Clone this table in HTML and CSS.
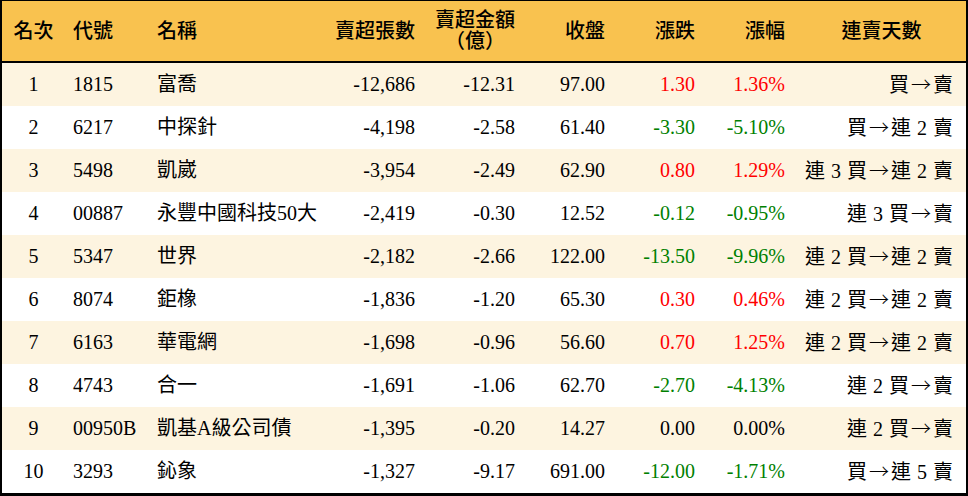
FILE: index.html
```html
<!DOCTYPE html>
<html lang="zh-Hant">
<head>
<meta charset="utf-8">
<title>賣超排行</title>
<link rel="stylesheet" href="styles.css">
</head>
<body>
<div class="board">
  <div class="row head">
    <div class="c rank">名次</div>
    <div class="c code">代號</div>
    <div class="c name">名稱</div>
    <div class="c num">賣超張數</div>
    <div class="c num two"><span>賣超金額<br>（億）</span></div>
    <div class="c num">收盤</div>
    <div class="c num">漲跌</div>
    <div class="c num pct">漲幅</div>
    <div class="c days hd">連賣天數</div>
  </div>
  <div class="row alt">
    <div class="c rank">1</div><div class="c code">1815</div><div class="c name">富喬</div>
    <div class="c num">-12,686</div><div class="c num">-12.31</div><div class="c num">97.00</div>
    <div class="c num up">1.30</div><div class="c num pct up">1.36%</div><div class="c days">買<span class="ar">→</span>賣</div>
  </div>
  <div class="row">
    <div class="c rank">2</div><div class="c code">6217</div><div class="c name">中探針</div>
    <div class="c num">-4,198</div><div class="c num">-2.58</div><div class="c num">61.40</div>
    <div class="c num dn">-3.30</div><div class="c num pct dn">-5.10%</div><div class="c days">買<span class="ar">→</span>連 2 賣</div>
  </div>
  <div class="row alt">
    <div class="c rank">3</div><div class="c code">5498</div><div class="c name">凱崴</div>
    <div class="c num">-3,954</div><div class="c num">-2.49</div><div class="c num">62.90</div>
    <div class="c num up">0.80</div><div class="c num pct up">1.29%</div><div class="c days">連 3 買<span class="ar">→</span>連 2 賣</div>
  </div>
  <div class="row">
    <div class="c rank">4</div><div class="c code">00887</div><div class="c name">永豐中國科技50大</div>
    <div class="c num">-2,419</div><div class="c num">-0.30</div><div class="c num">12.52</div>
    <div class="c num dn">-0.12</div><div class="c num pct dn">-0.95%</div><div class="c days">連 3 買<span class="ar">→</span>賣</div>
  </div>
  <div class="row alt">
    <div class="c rank">5</div><div class="c code">5347</div><div class="c name">世界</div>
    <div class="c num">-2,182</div><div class="c num">-2.66</div><div class="c num">122.00</div>
    <div class="c num dn">-13.50</div><div class="c num pct dn">-9.96%</div><div class="c days">連 2 買<span class="ar">→</span>連 2 賣</div>
  </div>
  <div class="row">
    <div class="c rank">6</div><div class="c code">8074</div><div class="c name">鉅橡</div>
    <div class="c num">-1,836</div><div class="c num">-1.20</div><div class="c num">65.30</div>
    <div class="c num up">0.30</div><div class="c num pct up">0.46%</div><div class="c days">連 2 買<span class="ar">→</span>連 2 賣</div>
  </div>
  <div class="row alt">
    <div class="c rank">7</div><div class="c code">6163</div><div class="c name">華電網</div>
    <div class="c num">-1,698</div><div class="c num">-0.96</div><div class="c num">56.60</div>
    <div class="c num up">0.70</div><div class="c num pct up">1.25%</div><div class="c days">連 2 買<span class="ar">→</span>連 2 賣</div>
  </div>
  <div class="row">
    <div class="c rank">8</div><div class="c code">4743</div><div class="c name">合一</div>
    <div class="c num">-1,691</div><div class="c num">-1.06</div><div class="c num">62.70</div>
    <div class="c num dn">-2.70</div><div class="c num pct dn">-4.13%</div><div class="c days">連 2 買<span class="ar">→</span>賣</div>
  </div>
  <div class="row alt">
    <div class="c rank">9</div><div class="c code">00950B</div><div class="c name">凱基A級公司債</div>
    <div class="c num">-1,395</div><div class="c num">-0.20</div><div class="c num">14.27</div>
    <div class="c num">0.00</div><div class="c num pct">0.00%</div><div class="c days">連 2 買<span class="ar">→</span>賣</div>
  </div>
  <div class="row">
    <div class="c rank">10</div><div class="c code">3293</div><div class="c name">鈊象</div>
    <div class="c num">-1,327</div><div class="c num">-9.17</div><div class="c num">691.00</div>
    <div class="c num dn">-12.00</div><div class="c num pct dn">-1.71%</div><div class="c days">買<span class="ar">→</span>連 5 賣</div>
  </div>
</div>
</body>
</html>
```
FILE: styles.css
```css
html, body {
  margin: 0;
  padding: 0;
  background: #fff;
}
.board {
  width: 964px;
  border-left: 2px solid #000;
  border-right: 2px solid #000;
  border-top: 1px solid #000;
  border-bottom: 3px solid #000;
  font-family: "Liberation Serif", "Noto Sans CJK TC", serif;
  font-size: 20px;
  color: #000;
}
.row {
  display: grid;
  grid-template-columns: 63px 84px 181px 95px 100px 90px 90px 92px 169px;
  height: 43px;
  align-items: center;
  background: #fff;
}
.row.alt {
  background: #fdf4e0;
}
.row.head {
  height: 60px;
  background: #f9c24f;
  border-bottom: 2px solid #000;
}
.head .c {
  font-weight: 500;
}
.c {
  white-space: nowrap;
  line-height: 21px;
}
.rank {
  text-align: center;
}
.code {
  padding-left: 8px;
}
.name {
  padding-left: 8px;
}
.num {
  text-align: right;
  padding-right: 10px;
}
.num.pct {
  padding-right: 12px;
}
.two span {
  display: inline-block;
  text-align: center;
}
.days {
  text-align: right;
  padding-right: 13px;
  word-spacing: 1px;
}
.days.hd {
  text-align: center;
  padding-right: 0;
}
.ar {
  font-family: "Noto Sans CJK TC", sans-serif;
  font-weight: 300;
  padding: 0 2px;
}
.up {
  color: #ff0000;
}
.dn {
  color: #008000;
}
```
